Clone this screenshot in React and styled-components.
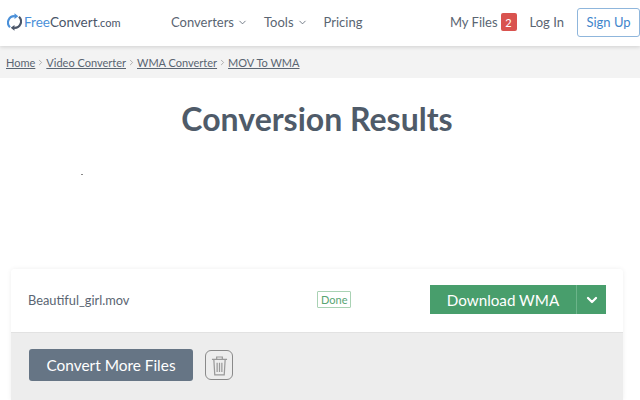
import React from 'react';
import styled, { createGlobalStyle } from 'styled-components';
import { ChevronDown, ChevronRight } from 'lucide-react';

const GlobalStyle = createGlobalStyle`
  html, body {
    margin: 0;
    padding: 0;
    height: 400px;
    overflow: hidden;
    background: #fff;
    font-family: Lato, "Noto Sans", sans-serif;
  }
  * { box-sizing: border-box; }
`

const App = () => {
  return (
    <Root>
      <GlobalStyle />
      <Header>
        <Logo>
          <svg width="15" height="18" viewBox="0 0 20 24" fill="none">
            <path d="M4 19A8.6 8.6 0 0 1 10.5 4.2" stroke="#4a90d9" strokeWidth="2.8" />
            <path d="M10 0.4L15 4.2L10 8Z" fill="#4a90d9" />
            <path d="M16 5A8.6 8.6 0 0 1 9.5 19.8" stroke="#4a5568" strokeWidth="2.8" />
            <path d="M10 16L5 19.8L10 23.6Z" fill="#4a5568" />
          </svg>
          <LogoText><span>Free</span>Convert<small>.com</small></LogoText>
        </Logo>
        <Nav>
          <NavItem>Converters <ChevronDown size={11} strokeWidth={1.8} /></NavItem>
          <NavItem>Tools <ChevronDown size={11} strokeWidth={1.8} /></NavItem>
          <NavItem>Pricing</NavItem>
        </Nav>
        <Actions>
          <NavItem>My Files <Badge>2</Badge></NavItem>
          <NavItem>Log In</NavItem>
          <SignUp>Sign Up</SignUp>
        </Actions>
      </Header>
      <Crumbs>
        <Crumb>Home</Crumb>
        <ChevronRight size={9} color="#999" />
        <Crumb>Video Converter</Crumb>
        <ChevronRight size={9} color="#999" />
        <Crumb>WMA Converter</Crumb>
        <ChevronRight size={9} color="#999" />
        <Crumb>MOV To WMA</Crumb>
      </Crumbs>
      <Title>Conversion Results</Title>
      <AdSlot><AdDot /></AdSlot>
      <Card>
        <FileRow>
          <FileName>Beautiful_girl.mov</FileName>
          <Status>Done</Status>
          <Download>
            <DownloadLabel>Download WMA</DownloadLabel>
            <DownloadArrow><ChevronDown size={16} strokeWidth={3.4} /></DownloadArrow>
          </Download>
        </FileRow>
        <Footer>
          <ConvertMore>Convert More Files</ConvertMore>
          <TrashButton>
            <svg width="17" height="21" viewBox="0 0 18 22" fill="none" stroke="#999" strokeWidth="1.3">
              <path d="M1 4.5H17M6 4.5V2H12V4.5" />
              <path d="M3 4.5L4 21H14L15 4.5" />
              <path d="M6.5 8V18M9 8V18M11.5 8V18" />
            </svg>
          </TrashButton>
        </Footer>
      </Card>
    </Root>
  )
}


const Root = styled.div`
  width: 640px;
  height: 400px;
  overflow: hidden;
  background: #fff;
`

const Header = styled.header`
  position: relative;
  display: flex;
  align-items: center;
  height: 46px;
  padding: 0 0 2px 7px;
  background: #fff;
  box-shadow: 0 1px 4px rgba(0, 0, 0, 0.15);
`

const Logo = styled.div`
  display: flex;
  align-items: center;
  gap: 2px;
  width: 164px;
`

const LogoText = styled.div`
  font-size: 13.5px;
  color: #4a5568;
  span { color: #4a90d9; }
  small { font-size: 11px; }
`

const Nav = styled.nav`
  display: flex;
  align-items: center;
  gap: 16px;
`

const NavItem = styled.div`
  display: flex;
  align-items: center;
  gap: 3px;
  font-size: 13px;
  color: #5a6572;
  white-space: nowrap;
`

const Actions = styled.div`
  display: flex;
  align-items: center;
  gap: 13px;
  margin-left: auto;
`

const Badge = styled.span`
  display: flex;
  align-items: center;
  justify-content: center;
  width: 16px;
  height: 18px;
  border-radius: 2px;
  background: #d9534f;
  color: #fff;
  font-size: 11px;
`

const SignUp = styled.button`
  width: 63px;
  height: 29px;
  padding: 0;
  border: 1px solid #8fb6dc;
  border-radius: 3px;
  background: #fff;
  color: #3f86cc;
  font-family: inherit;
  font-size: 13px;
`

const Crumbs = styled.div`
  display: flex;
  align-items: center;
  gap: 1px;
  height: 32px;
  padding: 1px 6px 0;
  background: #f3f3f3;
`

const Crumb = styled.a`
  font-size: 11px;
  color: #5a6572;
  text-decoration: underline;
`

const Title = styled.h1`
  margin: 19px 0 0;
  padding-right: 6px;
  text-align: center;
  font-size: 32px;
  line-height: 44px;
  font-weight: 700;
  color: #4f5b69;
`

const AdSlot = styled.div`
  height: 128px;
  padding: 33px 0 0 81px;
`

const AdDot = styled.div`
  width: 2px;
  height: 1px;
  background: #888;
`

const Card = styled.section`
  width: 612px;
  margin-left: 11px;
  border-radius: 4px 4px 0 0;
  box-shadow: 0 0 5px rgba(0, 0, 0, 0.07);
  overflow: hidden;
`

const FileRow = styled.div`
  display: flex;
  align-items: center;
  height: 64px;
  padding: 0 17px 2px;
  background: #fff;
  border-bottom: 1px solid #e2e2e2;
`

const FileName = styled.div`
  width: 289px;
  font-size: 12.8px;
  color: #5a6572;
`

const Status = styled.div`
  padding: 0 3px;
  height: 17px;
  line-height: 15px;
  border: 1px solid #a9d2b4;
  border-radius: 1px;
  color: #58a572;
  font-size: 11px;
`

const Download = styled.div`
  display: flex;
  height: 29px;
  margin-left: auto;
  background: #489e6c;
  color: #fff;
`

const DownloadLabel = styled.div`
  display: flex;
  align-items: center;
  justify-content: center;
  width: 147px;
  font-size: 15.2px;
  border-right: 1px solid #6cb48a;
`

const DownloadArrow = styled.div`
  display: flex;
  align-items: center;
  justify-content: center;
  width: 29px;
`

const Footer = styled.div`
  display: flex;
  align-items: center;
  gap: 12px;
  height: 67px;
  padding: 0 17px 3px 18px;
  background: #ededed;
`

const ConvertMore = styled.button`
  width: 164px;
  height: 32px;
  padding: 0;
  border: 0;
  border-radius: 3px;
  background: #667585;
  color: #fff;
  font-family: inherit;
  font-size: 15.4px;
`

const TrashButton = styled.button`
  display: flex;
  align-items: center;
  justify-content: center;
  width: 28px;
  height: 30px;
  padding: 0;
  border: 1.5px solid #8a8a8a;
  border-radius: 6px;
  background: transparent;
`

export default App;
